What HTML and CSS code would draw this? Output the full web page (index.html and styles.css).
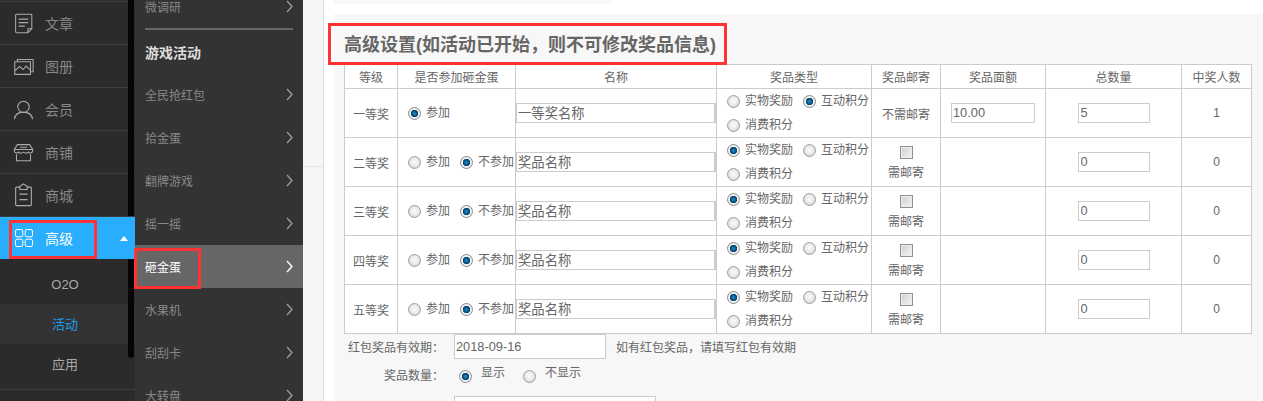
FILE: index.html
```html
<!DOCTYPE html>
<html lang="zh-CN">
<head>
<meta charset="utf-8">
<title>高级设置</title>
<link rel="stylesheet" href="styles.css">
</head>
<body>
<svg class="defs" width="0" height="0" aria-hidden="true">
  <symbol id="chev" viewBox="0 0 7 13"><polyline points="1,1 6,6.5 1,12" fill="none" stroke="currentColor" stroke-width="1.4"/></symbol>
</svg>
<div class="page">
  <nav class="nav">
    <div class="nav-item">
      <svg class="nav-icon" viewBox="0 0 24 24"><path d="M4 1.500h16.500a1 1 0 0 1 1 1V18l-4.500 4.500H4a1 1 0 0 1-1-1v-19a1 1 0 0 1 1-1zM21.500 18H17v4.500M6.500 7h11M6.500 11h11M6.500 15h7"/></svg>
      <span>文章</span>
    </div>
    <div class="nav-item">
      <svg class="nav-icon" viewBox="0 0 24 24"><path d="M2 6.500h18v14.500H2zM5 6.500V4h18v14h-3M2 17l5.500-5 4 3.500 3.500-4 5 5M11 10h.01"/></svg>
      <span>图册</span>
    </div>
    <div class="nav-item">
      <svg class="nav-icon" viewBox="0 0 24 24"><circle cx="12" cy="9" r="6.500"/><path d="M1.500 23c1-5.500 5-8 10.500-8s9.500 2.500 10.500 8"/></svg>
      <span>会员</span>
    </div>
    <div class="nav-item">
      <svg class="nav-icon" viewBox="0 0 24 24"><path d="M5 3h14l3.500 5.500v1.500c0 3-3.500 3-5 1.500-1.500 1.500-3.500 1.500-5.500 0-2 1.500-4 1.500-5.500 0-1.500 1.500-5 1.500-5-1.500V8.500zM1.500 8.500h21M4 14v7.500h16V14M8 6h8"/></svg>
      <span>商铺</span>
    </div>
    <div class="nav-item">
      <svg class="nav-icon nav-icon-tall" viewBox="0 0 20 26"><path d="M6 4.500H2.500a1 1 0 0 0-1 1v18a1 1 0 0 0 1 1h15a1 1 0 0 0 1-1v-18a1 1 0 0 0-1-1H14M6 7V3.500l4-2.500 4 2.500V7zM5.500 12h9M5.500 18h9"/></svg>
      <span>商城</span>
    </div>
    <div class="nav-item nav-item-active">
      <svg class="nav-icon nav-icon-grid" viewBox="0 0 18 18"><rect x=".5" y=".5" width="7.300" height="7.300" rx="1.500"/><rect x="10.200" y=".5" width="7.300" height="7.300" rx="1.500"/><rect x=".5" y="10.200" width="7.300" height="7.300" rx="1.500"/><rect x="10.200" y="10.200" width="7.300" height="7.300" rx="1.500"/></svg>
      <span>高级</span>
      <i class="caret"></i>
    </div>
    <div class="subnav">
      <div class="sub-item">O2O</div>
      <div class="sub-item sub-item-on">活动</div>
      <div class="sub-item">应用</div>
    </div>
    <div class="scrollbar"></div>
  </nav>

  <aside class="menu">
    <div class="menu-list">
      <div class="menu-item">微调研<svg class="chev"><use href="#chev"/></svg></div>
      <div class="menu-rule"></div>
      <div class="menu-item menu-head">游戏活动</div>
      <div class="menu-item">全民抢红包<svg class="chev"><use href="#chev"/></svg></div>
      <div class="menu-item">拾金蛋<svg class="chev"><use href="#chev"/></svg></div>
      <div class="menu-item">翻牌游戏<svg class="chev"><use href="#chev"/></svg></div>
      <div class="menu-item">摇一摇<svg class="chev"><use href="#chev"/></svg></div>
      <div class="menu-item menu-item-on">砸金蛋<svg class="chev"><use href="#chev"/></svg></div>
      <div class="menu-item">水果机<svg class="chev"><use href="#chev"/></svg></div>
      <div class="menu-item">刮刮卡<svg class="chev"><use href="#chev"/></svg></div>
      <div class="menu-item">大转盘<svg class="chev"><use href="#chev"/></svg></div>
    </div>
  </aside>

  <div class="gutter"><div class="gutter-tick"></div></div>

  <main class="main">
    <div class="top-strip"></div>
    <section class="panel">
      <h2 class="panel-title">高级设置(如活动已开始，则不可修改奖品信息)</h2>
      <table class="prizes">
        <colgroup>
          <col class="c1"><col class="c2"><col class="c3"><col class="c4"><col class="c5"><col class="c6"><col class="c7"><col class="c8">
        </colgroup>
        <thead>
          <tr><th>等级</th><th>是否参加砸金蛋</th><th>名称</th><th>奖品类型</th><th>奖品邮寄</th><th>奖品面额</th><th>总数量</th><th>中奖人数</th></tr>
        </thead>
        <tbody>
          <tr>
            <td>一等奖</td>
            <td class="join"><label class="opt"><input type="radio" name="j1" checked>参加</label></td>
            <td class="name"><input class="field" type="text" value="一等奖名称"></td>
            <td class="kind">
              <label class="opt"><input type="radio" name="k1">实物奖励</label><label class="opt"><input type="radio" name="k1" checked>互动积分</label><label class="opt"><input type="radio" name="k1">消费积分</label>
            </td>
            <td>不需邮寄</td>
            <td><input class="field field-face" type="text" value="10.00"></td>
            <td><input class="field field-num" type="text" value="5"></td>
            <td>1</td>
          </tr>
          <tr>
            <td>二等奖</td>
            <td class="join"><label class="opt"><input type="radio" name="j2">参加</label><label class="opt"><input type="radio" name="j2" checked>不参加</label></td>
            <td class="name"><input class="field" type="text" value="奖品名称"></td>
            <td class="kind">
              <label class="opt"><input type="radio" name="k2" checked>实物奖励</label><label class="opt"><input type="radio" name="k2">互动积分</label><label class="opt"><input type="radio" name="k2">消费积分</label>
            </td>
            <td><label class="post"><input type="checkbox">需邮寄</label></td>
            <td></td>
            <td><input class="field field-num" type="text" value="0"></td>
            <td>0</td>
          </tr>
          <tr>
            <td>三等奖</td>
            <td class="join"><label class="opt"><input type="radio" name="j3">参加</label><label class="opt"><input type="radio" name="j3" checked>不参加</label></td>
            <td class="name"><input class="field" type="text" value="奖品名称"></td>
            <td class="kind">
              <label class="opt"><input type="radio" name="k3" checked>实物奖励</label><label class="opt"><input type="radio" name="k3">互动积分</label><label class="opt"><input type="radio" name="k3">消费积分</label>
            </td>
            <td><label class="post"><input type="checkbox">需邮寄</label></td>
            <td></td>
            <td><input class="field field-num" type="text" value="0"></td>
            <td>0</td>
          </tr>
          <tr>
            <td>四等奖</td>
            <td class="join"><label class="opt"><input type="radio" name="j4">参加</label><label class="opt"><input type="radio" name="j4" checked>不参加</label></td>
            <td class="name"><input class="field" type="text" value="奖品名称"></td>
            <td class="kind">
              <label class="opt"><input type="radio" name="k4" checked>实物奖励</label><label class="opt"><input type="radio" name="k4">互动积分</label><label class="opt"><input type="radio" name="k4">消费积分</label>
            </td>
            <td><label class="post"><input type="checkbox">需邮寄</label></td>
            <td></td>
            <td><input class="field field-num" type="text" value="0"></td>
            <td>0</td>
          </tr>
          <tr>
            <td>五等奖</td>
            <td class="join"><label class="opt"><input type="radio" name="j5">参加</label><label class="opt"><input type="radio" name="j5" checked>不参加</label></td>
            <td class="name"><input class="field" type="text" value="奖品名称"></td>
            <td class="kind">
              <label class="opt"><input type="radio" name="k5" checked>实物奖励</label><label class="opt"><input type="radio" name="k5">互动积分</label><label class="opt"><input type="radio" name="k5">消费积分</label>
            </td>
            <td><label class="post"><input type="checkbox">需邮寄</label></td>
            <td></td>
            <td><input class="field field-num" type="text" value="0"></td>
            <td>0</td>
          </tr>
        </tbody>
      </table>
      <div class="form-row form-row-date">
        <span class="form-label">红包奖品有效期：</span>
        <input class="field field-date" type="text" value="2018-09-16">
        <span class="form-note">如有红包奖品，请填写红包有效期</span>
      </div>
      <div class="form-row form-row-show">
        <span class="form-label">奖品数量：</span>
        <label class="opt opt-show"><input type="radio" name="show" checked><span>显示</span></label>
        <label class="opt opt-show"><input type="radio" name="show"><span>不显示</span></label>
      </div>
      <div class="form-row form-row-last">
        <span class="form-label"></span>
        <input class="field field-last" type="text">
      </div>
    </section>
  </main>
</div>
<div class="mark mark-level"></div>
<div class="mark mark-egg"></div>
<div class="mark mark-title"></div>
</body>
</html>
```
FILE: styles.css
```css
* { box-sizing: border-box; }
html, body { margin: 0; height: 401px; overflow: hidden; background: #fff; }
body {
  position: relative;
  font-family: "Liberation Sans", "Noto Sans CJK SC", sans-serif;
  font-size: 12px;
  color: #666;
}
.defs { position: absolute; }
.page { display: flex; height: 401px; overflow: hidden; }

/* first column */
.nav {
  position: relative;
  flex: 0 0 135px;
  height: 401px;
  padding-top: 1px;
  background: #2b2b2b;
}
.nav-item {
  display: flex;
  align-items: center;
  height: 43px;
  padding-left: 13px;
  border-top: 1px solid #3d3d3d;
  font-size: 14px;
  line-height: 20px;
  color: #888;
}
.nav-item span { margin: 2px 0 0 11px; }
.nav-icon {
  flex: none;
  width: 21px;
  height: 21px;
  fill: none;
  stroke: #aaa;
  stroke-width: 1.2;
}
.nav-icon-tall { width: 21px; height: 24px; }
.nav-icon-grid { width: 18px; height: 18px; margin: 0 1px 0 2px; stroke: #fff; stroke-width: 1; }
.nav-item-active {
  position: relative;
  z-index: 2;
  background: #29aefd;
  border-top-color: #3d3d3d;
  color: #fff;
}
.caret {
  position: absolute;
  top: 19px;
  left: 120px;
  width: 0;
  height: 0;
  border-left: 4px solid transparent;
  border-right: 4px solid transparent;
  border-bottom: 5px solid #fff;
}
.subnav {
  height: 131px;
  padding-top: 5px;
  border-bottom: 1px solid #3d3d3d;
}
.sub-item {
  height: 40px;
  padding-right: 5px;
  font-size: 13px;
  line-height: 42px;
  text-align: center;
  color: #aaa;
}
.sub-item-on { background: #333; color: #1f9df0; }
.scrollbar {
  position: absolute;
  top: 0;
  left: 128px;
  width: 6px;
  height: 358px;
  background: #050505;
  border-radius: 0 0 3px 3px;
}

/* second column */
.menu {
  flex: 0 0 168px;
  height: 401px;
  overflow: hidden;
  background: #333;
}
.menu-list { margin-top: -15px; }
.menu-item {
  display: flex;
  align-items: center;
  justify-content: space-between;
  height: 43px;
  padding: 2px 10px 0;
  line-height: 18px;
  color: #888;
}
.chev { width: 7px; height: 13px; margin-top: -2px; color: #999; }
.menu-rule { height: 2px; margin: 0 10px; background: #666; }
.menu-head { font-size: 14px; font-weight: 700; color: #ddd; }
.menu-item-on { background: #666; color: #fff; }
.menu-item-on .chev { color: #fff; }

/* gutter */
.gutter {
  flex: 0 0 21px;
  height: 401px;
  padding-top: 166px;
  background: #f6f6f6;
  border-right: 1px solid #ddd;
}
.gutter-tick { height: 1px; background: #e6e6e6; }

/* main */
.main { flex: 1; min-width: 0; padding-left: 10px; }
.top-strip { width: 278px; height: 4px; margin-bottom: 10px; background: #f8f8f8; }
.panel { height: 387px; padding: 19px 0 0 10px; background: #f7f7f7; }
.panel-title {
  margin: 0 0 7px;
  font-size: 18px;
  font-weight: 700;
  line-height: 24px;
  color: #666;
}
.prizes {
  width: 907px;
  table-layout: fixed;
  border-collapse: collapse;
  background: #fff;
}
.c1 { width: 53px; }
.c2 { width: 118px; }
.c3 { width: 201px; }
.c4 { width: 155px; }
.c5 { width: 69px; }
.c6 { width: 105px; }
.c7 { width: 136px; }
.c8 { width: 70px; }
.prizes th, .prizes td {
  padding: 0;
  border: 1px solid #ccc;
  font-weight: 400;
  text-align: center;
  vertical-align: middle;
  color: #666;
}
.prizes th { height: 24px; }
.prizes td { height: 49px; }
.prizes td.join { padding-left: 10px; text-align: left; white-space: nowrap; }
.prizes td.kind { padding-left: 10px; text-align: left; line-height: 24px; }
.opt {
  display: inline-flex;
  align-items: center;
  height: 24px;
  margin-right: 10px;
  line-height: 24px;
  vertical-align: top;
  white-space: nowrap;
}
.join .opt:last-child { margin-right: 0; }
.kind .opt:nth-child(2) { margin-right: 0; }

input[type="radio"] {
  appearance: none;
  flex: none;
  width: 13px;
  height: 13px;
  margin: 0 5px 0 0;
  border: 1px solid #a0a0a0;
  border-radius: 50%;
  background: radial-gradient(circle at 50% 45%, #fafafa 0, #ececec 45%, #c4c4c4 100%);
}
input[type="radio"]:checked {
  border-color: #8c8c8c;
  background: radial-gradient(circle at 50% 50%, #2a8fc4 0, #0a5f95 2px, #063f68 3.4px, #f4f4f4 4px, #d8d8d8 100%);
}
input[type="checkbox"] {
  appearance: none;
  display: block;
  width: 13px;
  height: 13px;
  margin: 0 auto 6px;
  border: 1px solid #8f8f8f;
  background: linear-gradient(135deg, #cfcfcf, #f4f4f4);
  box-shadow: inset 0 0 0 1px #eee;
}
.post { display: block; padding-top: 2px; line-height: 16px; }

.field {
  display: block;
  height: 20px;
  margin: 0 auto 1px;
  padding: 0 1px;
  border: 1px solid #ccc;
  border-right-width: 2px;
  background: #fff;
  font-family: "Liberation Sans", "Noto Sans CJK SC", sans-serif;
  font-size: 13.33px;
  color: #666;
}
.name .field { width: 100%; }
.field-face { width: 84px; border-right-width: 1px; font-size: 12.8px; }
.field-num { width: 72px; padding-left: 2px; border-right-width: 1px; font-size: 12.8px; }

.form-row { display: flex; align-items: center; }
.form-row-date { height: 25px; }
.form-row-show { height: 28px; margin-top: 1px; margin-bottom: 8px; }
.form-label { flex: 0 0 100px; margin-right: 10px; text-align: right; }
.field-date { width: 152px; height: 25px; margin: 0; border-right-width: 1px; font-size: 12.8px; }
.form-note { margin-left: 10px; }
.opt-show { margin-top: 4px; margin-right: 18px; }
.opt-show:first-of-type { margin-left: 5px; }
.opt-show input { margin-right: 9px; }
.opt-show span { position: relative; top: -3px; }
.field-last { width: 202px; height: 25px; margin: 0; border-right-width: 1px; }

/* red annotation boxes */
.mark { position: absolute; z-index: 5; border: 3px solid #ff3333; }
.mark-level { left: 9px; top: 220px; width: 88px; height: 39px; }
.mark-egg { left: 134px; top: 248px; width: 67px; height: 41px; }
.mark-title { left: 328px; top: 23px; width: 399px; height: 42px; }
```
